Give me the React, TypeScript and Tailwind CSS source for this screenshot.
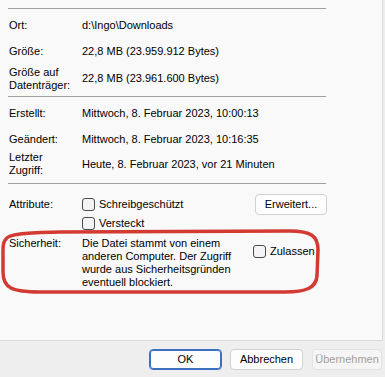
import type { ReactNode } from "react";

const font = { fontFamily: '"Liberation Sans", Arial, sans-serif' };

function Separator() {
  return <div className="ml-[-1px] h-px w-[318px] bg-[#a0a0a0]" />;
}

function Row({ label, children, className }: { label: ReactNode; children?: ReactNode; className: string }) {
  return (
    <div className={`flex items-center ${className}`}>
      <div className="w-[73px] leading-[13px]">{label}</div>
      <div className="leading-[13px]">{children}</div>
    </div>
  );
}

function Checkbox({ label }: { label: string }) {
  return (
    <label className="flex items-center gap-[4px] leading-[13px]">
      <span className="inline-block h-[13px] w-[13px] rounded-[3px] border border-[#4a4a4a] bg-[#f4f4f4]" />
      <span>{label}</span>
    </label>
  );
}

function Button({ children, className }: { children: ReactNode; className: string }) {
  return (
    <button
      type="button"
      className={`flex h-[21px] items-center justify-center rounded-[4px] border text-[11px] ${className}`}
    >
      {children}
    </button>
  );
}

export default function App() {
  return (
    <div className="relative flex h-[377px] w-[385px] flex-col bg-[#eeeeee] text-[11px] text-black" style={font}>
      <div className="h-[341px] w-[383px] border-b border-r border-[#dadada] bg-[#f9f9f9] pl-[9px] pt-[8px]">
        <Separator />
        <Row label="Ort:" className="h-[32px]">d:\Ingo\Downloads</Row>
        <Row label="Größe:" className="h-[20px]">22,8 MB (23.959.912 Bytes)</Row>
        <Row label={<>Größe auf<br />Datenträger:</>} className="h-[35px]">22,8 MB (23.961.600 Bytes)</Row>
        <Separator />
        <Row label="Erstellt:" className="h-[32px]">Mittwoch, 8. Februar 2023, 10:00:13</Row>
        <Row label="Geändert:" className="h-[20px]">Mittwoch, 8. Februar 2023, 10:16:35</Row>
        <Row label={<>Letzter<br />Zugriff:</>} className="h-[30px]">Heute, 8. Februar 2023, vor 21 Minuten</Row>
        <div className="h-[4px]" />
        <Separator />

        <div className="mt-[10px] flex h-[21px] items-center">
          <div className="w-[73px]">Attribute:</div>
          <Checkbox label="Schreibgeschützt" />
          <Button className="ml-auto mr-[55px] w-[72px] border-[#d0d0d0] bg-[#fdfdfd]">Erweitert...</Button>
        </div>
        <div className="flex h-[17px] items-center pl-[73px]">
          <Checkbox label="Versteckt" />
        </div>

        <div className="mt-[5px] flex items-start">
          <div className="w-[73px] leading-[13px]">Sicherheit:</div>
          <div className="w-[171px] leading-[13px]">
            Die Datei stammt von einem
            <br />
            anderen Computer. Der Zugriff
            <br />
            wurde aus Sicherheitsgründen
            <br />
            eventuell blockiert.
          </div>
          <div className="mt-[8px]">
            <Checkbox label="Zulassen" />
          </div>
        </div>
      </div>

      <div className="flex flex-1 items-start pt-[8px]">
        <Button className="ml-[149px] w-[73px] border-[#3d6fc2] bg-[#fdfdfd] shadow-[inset_0_0_0_1px_#3d6fc2]">OK</Button>
        <Button className="ml-[8px] w-[73px] border-[#d0d0d0] bg-[#fdfdfd]">Abbrechen</Button>
        <Button className="ml-[9px] w-[70px] border-[#e3e3e3] bg-[#f5f5f5] text-[#a0a0a0]">Übernehmen</Button>
      </div>

      <svg
        className="pointer-events-none absolute left-0 top-0"
        width="385"
        height="377"
        viewBox="0 0 385 377"
        fill="none"
      >
        <path
          d="M 6 239 C 9 233, 30 233, 60 232 L 290 231 C 311 231, 318 236, 318 250 L 317 276 C 316 288, 306 292, 285 292 L 40 292 C 12 292, 3 288, 3 272 L 3 250 C 3 244, 4 241, 6 239 Z"
          stroke="#d23a32"
          strokeWidth="3.5"
        />
      </svg>
    </div>
  );
}
